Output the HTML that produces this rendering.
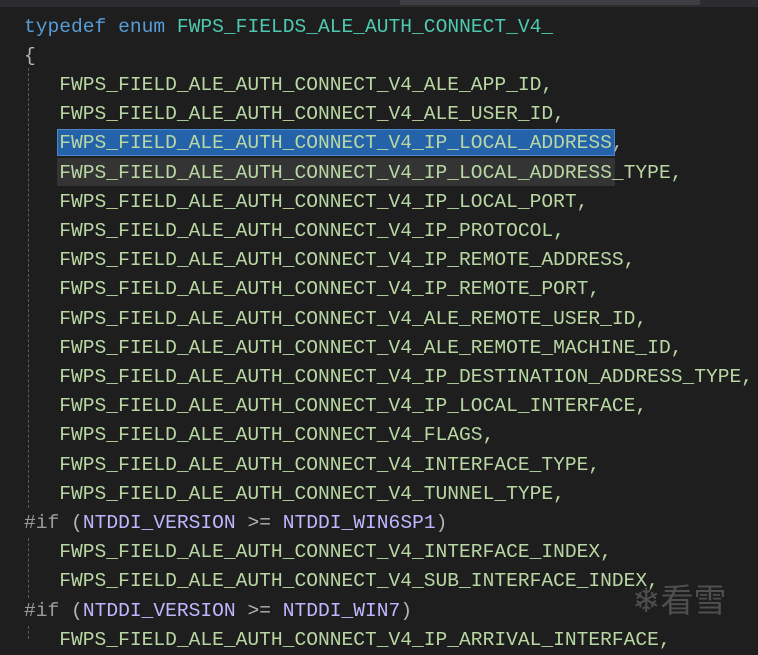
<!DOCTYPE html>
<html><head><style>
body{margin:0;background:#1e1e1e;width:758px;height:639px;overflow:hidden;position:relative;font-family:"Liberation Mono",monospace;}
.top{position:absolute;left:0;top:0;width:758px;height:7px;background:#2d2d30;}
.top2{position:absolute;left:400px;top:0;width:300px;height:5px;background:#3f3f46;}
.l{position:absolute;left:24px;height:29px;line-height:29px;font-size:19.6px;white-space:pre;color:#b8d7a3;}
.k{color:#569cd6}.t{color:#4ec9b0}.p{color:#9b9b9b}.m{color:#beb7ff}.w{color:#b4b4b4}
.sel{position:absolute;left:57px;top:129px;width:558px;height:27px;background:#2462aa;border:1px solid #4a86c8;box-sizing:border-box;}
.hl{position:absolute;left:57px;top:158px;width:558px;height:28px;background:#343434;}
.g{position:absolute;left:28px;border-left:1px dashed #5a5a5a;}
.wm{position:absolute;left:632px;top:578px;font-family:"Noto Sans CJK SC",sans-serif;font-size:33px;line-height:40px;color:#4e4e4e;}
.wm span{font-size:34px;}
</style></head><body>
<div class="top"></div><div class="top2"></div>
<div class="sel"></div><div class="hl"></div>
<div class="g" style="top:68px;height:440px"></div>
<div class="g" style="top:538px;height:60px"></div>
<div class="g" style="top:626px;height:13px"></div>
<div class="l" style="top:13px"><span class="k">typedef</span> <span class="k">enum</span> <span class="t">FWPS_FIELDS_ALE_AUTH_CONNECT_V4_</span></div>
<div class="l w" style="top:42px">{</div>
<div class="l" style="top:71px">   FWPS_FIELD_ALE_AUTH_CONNECT_V4_ALE_APP_ID,</div>
<div class="l" style="top:100px">   FWPS_FIELD_ALE_AUTH_CONNECT_V4_ALE_USER_ID,</div>
<div class="l" style="top:129px">   FWPS_FIELD_ALE_AUTH_CONNECT_V4_IP_LOCAL_ADDRESS<span class="w">,</span></div>
<div class="l" style="top:159px">   FWPS_FIELD_ALE_AUTH_CONNECT_V4_IP_LOCAL_ADDRESS_TYPE,</div>
<div class="l" style="top:188px">   FWPS_FIELD_ALE_AUTH_CONNECT_V4_IP_LOCAL_PORT,</div>
<div class="l" style="top:217px">   FWPS_FIELD_ALE_AUTH_CONNECT_V4_IP_PROTOCOL,</div>
<div class="l" style="top:246px">   FWPS_FIELD_ALE_AUTH_CONNECT_V4_IP_REMOTE_ADDRESS,</div>
<div class="l" style="top:275px">   FWPS_FIELD_ALE_AUTH_CONNECT_V4_IP_REMOTE_PORT,</div>
<div class="l" style="top:305px">   FWPS_FIELD_ALE_AUTH_CONNECT_V4_ALE_REMOTE_USER_ID,</div>
<div class="l" style="top:334px">   FWPS_FIELD_ALE_AUTH_CONNECT_V4_ALE_REMOTE_MACHINE_ID,</div>
<div class="l" style="top:363px">   FWPS_FIELD_ALE_AUTH_CONNECT_V4_IP_DESTINATION_ADDRESS_TYPE,</div>
<div class="l" style="top:392px">   FWPS_FIELD_ALE_AUTH_CONNECT_V4_IP_LOCAL_INTERFACE,</div>
<div class="l" style="top:421px">   FWPS_FIELD_ALE_AUTH_CONNECT_V4_FLAGS,</div>
<div class="l" style="top:451px">   FWPS_FIELD_ALE_AUTH_CONNECT_V4_INTERFACE_TYPE,</div>
<div class="l" style="top:480px">   FWPS_FIELD_ALE_AUTH_CONNECT_V4_TUNNEL_TYPE,</div>
<div class="l" style="top:509px"><span class="p">#if</span> <span class="w">(</span><span class="m">NTDDI_VERSION</span> <span class="w">&gt;=</span> <span class="m">NTDDI_WIN6SP1</span><span class="w">)</span></div>
<div class="l" style="top:538px">   FWPS_FIELD_ALE_AUTH_CONNECT_V4_INTERFACE_INDEX,</div>
<div class="l" style="top:567px">   FWPS_FIELD_ALE_AUTH_CONNECT_V4_SUB_INTERFACE_INDEX,</div>
<div class="l" style="top:597px"><span class="p">#if</span> <span class="w">(</span><span class="m">NTDDI_VERSION</span> <span class="w">&gt;=</span> <span class="m">NTDDI_WIN7</span><span class="w">)</span></div>
<div class="l" style="top:626px">   FWPS_FIELD_ALE_AUTH_CONNECT_V4_IP_ARRIVAL_INTERFACE,</div>
<div class="wm"><span>❄</span>看雪</div>
</body></html>
